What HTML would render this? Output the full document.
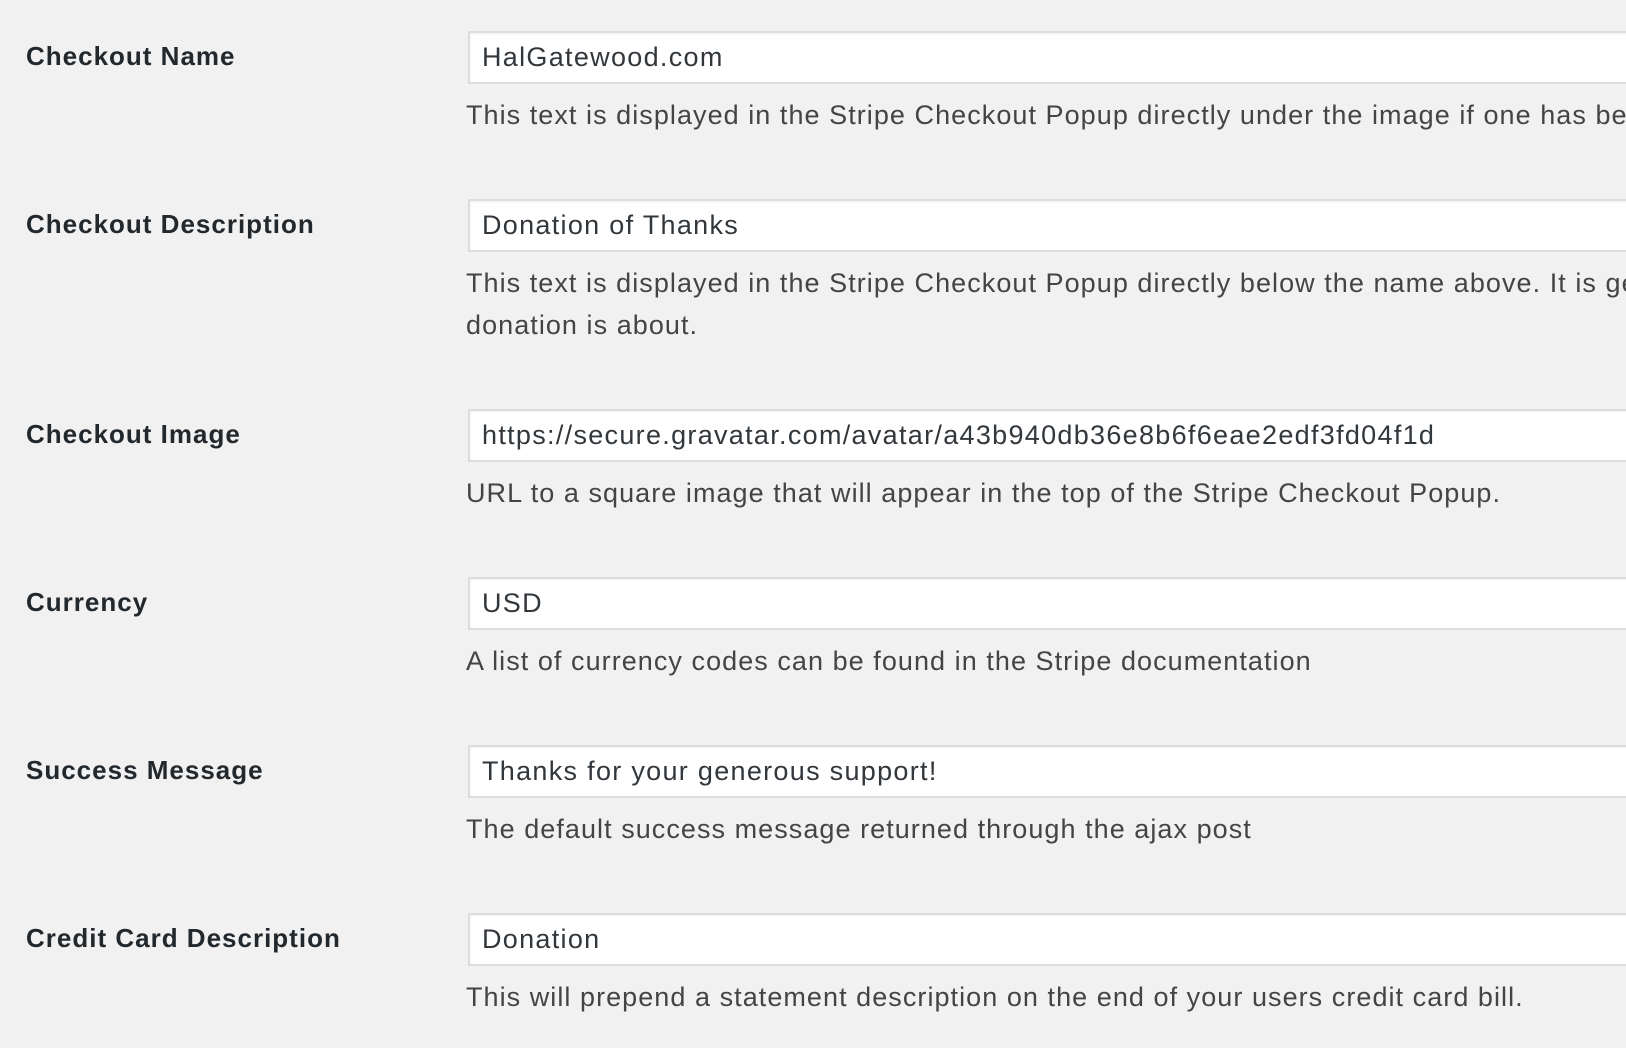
<!DOCTYPE html>
<html><head><meta charset="utf-8"><style>
html,body{margin:0;padding:0;background:#f1f1f1;width:1626px;height:1048px;overflow:hidden;font-family:"Liberation Sans",sans-serif;}
.l{position:absolute;left:26px;font-weight:bold;font-size:26px;color:#23282d;line-height:40px;letter-spacing:1px;}
.i{position:absolute;left:468px;width:1200px;height:49px;background:#fff;border:2px solid #ddd;box-shadow:inset 0 1px 2px rgba(0,0,0,.07);box-sizing:content-box;font-size:27px;color:#32373c;line-height:49px;padding-left:12px;white-space:nowrap;letter-spacing:1.3px;}
.d{position:absolute;left:466px;font-size:27px;color:#444;line-height:41.5px;white-space:nowrap;letter-spacing:1.05px;}
</style></head><body>
<div class="l" style="top:36px">Checkout Name</div>
<div class="i" style="top:31px">HalGatewood.com</div>
<div class="d" style="top:95px">This text is displayed in the Stripe Checkout Popup directly under the image if one has be</div>

<div class="l" style="top:204px">Checkout Description</div>
<div class="i" style="top:199px">Donation of Thanks</div>
<div class="d" style="top:263px">This text is displayed in the Stripe Checkout Popup directly below the name above. It is ge<br>donation is about.</div>

<div class="l" style="top:414px">Checkout Image</div>
<div class="i" style="top:409px">https://secure.gravatar.com/avatar/a43b940db36e8b6f6eae2edf3fd04f1d</div>
<div class="d" style="top:473px">URL to a square image that will appear in the top of the Stripe Checkout Popup.</div>

<div class="l" style="top:582px">Currency</div>
<div class="i" style="top:577px">USD</div>
<div class="d" style="top:641px">A list of currency codes can be found in the Stripe documentation</div>

<div class="l" style="top:750px">Success Message</div>
<div class="i" style="top:745px">Thanks for your generous support!</div>
<div class="d" style="top:809px">The default success message returned through the ajax post</div>

<div class="l" style="top:918px">Credit Card Description</div>
<div class="i" style="top:913px">Donation</div>
<div class="d" style="top:977px">This will prepend a statement description on the end of your users credit card bill.</div>
</body></html>
